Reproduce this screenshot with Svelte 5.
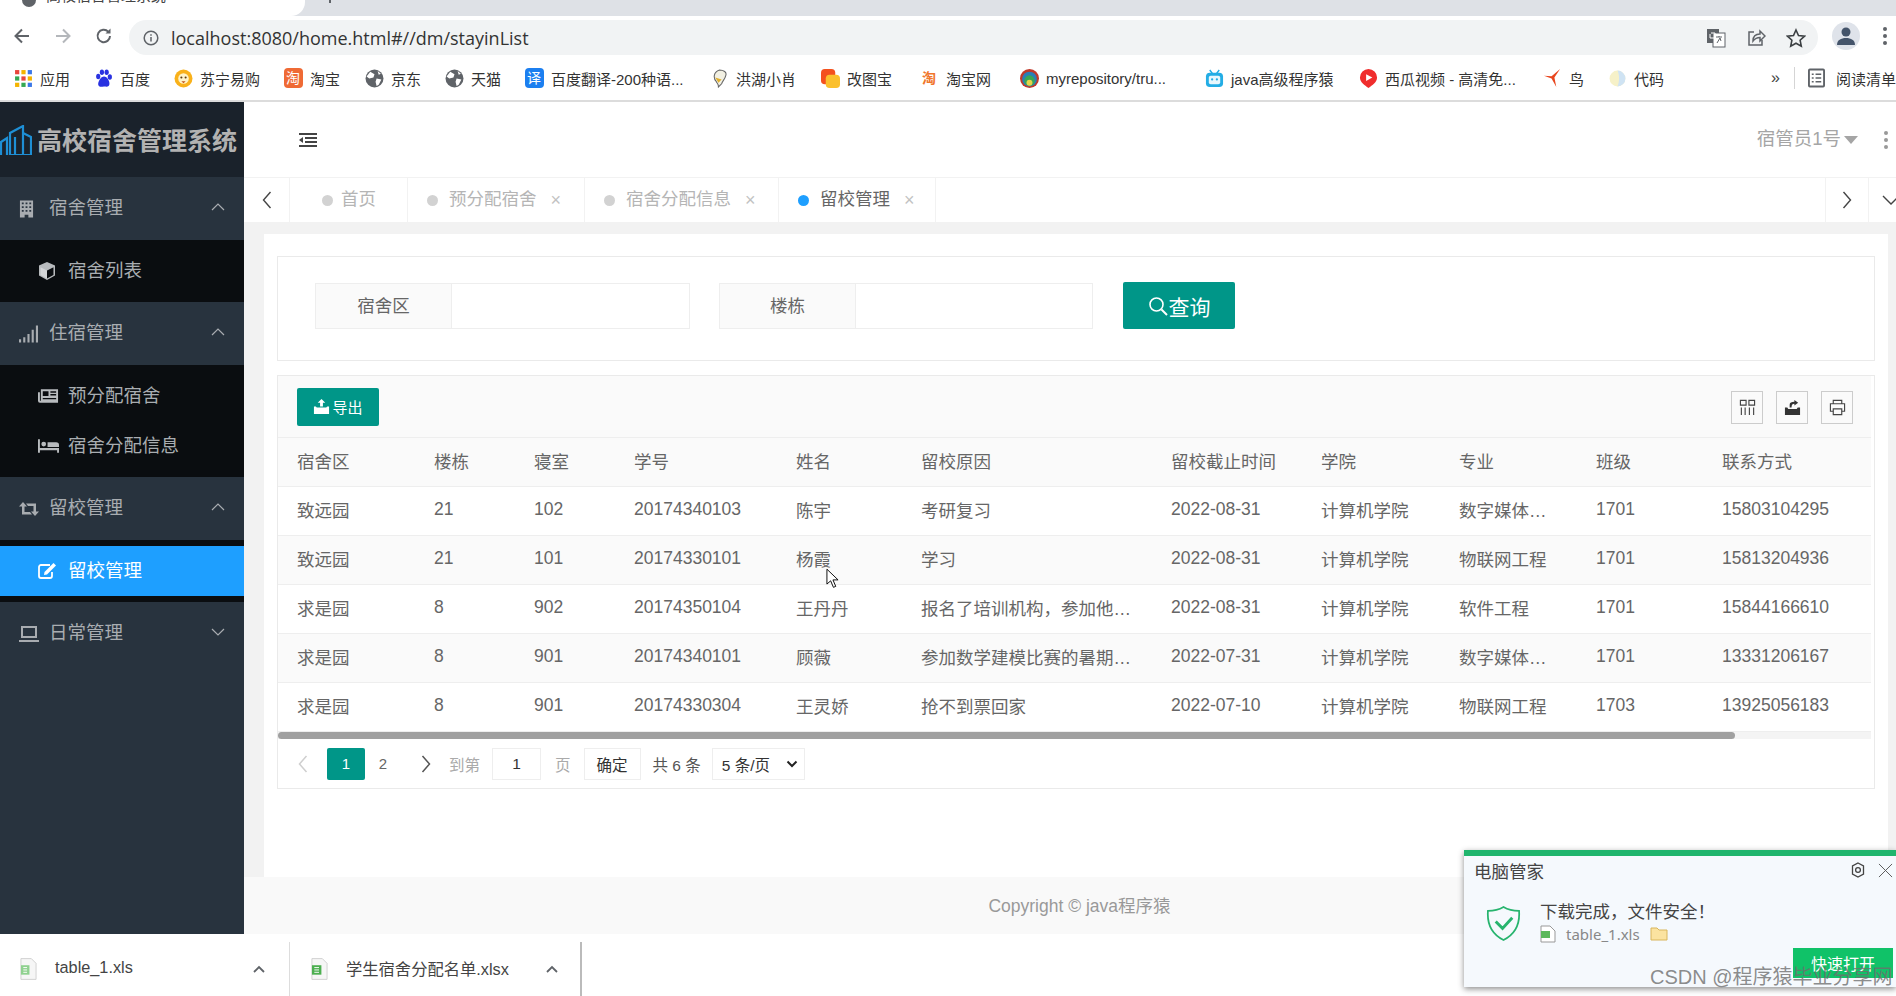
<script>
  const bookmarks = [
    { k: 'apps', t: '应用', w: 80 },
    { k: 'baidu', t: '百度', w: 80 },
    { k: 'suning', t: '苏宁易购', w: 110 },
    { k: 'tao', t: '淘宝', w: 81 },
    { k: 'globe', t: '京东', w: 80 },
    { k: 'globe', t: '天猫', w: 80 },
    { k: 'yi', t: '百度翻译-200种语...', w: 185 },
    { k: 'bird', t: '洪湖小肖', w: 111 },
    { k: 'tu', t: '改图宝', w: 99 },
    { k: 'tao2', t: '淘宝网', w: 100 },
    { k: 'repo', t: 'myrepository/tru...', w: 185 },
    { k: 'bili', t: 'java高级程序猿', w: 154 },
    { k: 'xigua', t: '西瓜视频 - 高清免...', w: 184 },
    { k: 'niao', t: '鸟', w: 65 },
    { k: 'code', t: '代码', w: 80 }
  ];
  const tabs = [
    { t: '首页', w: 118, x: false },
    { t: '预分配宿舍', w: 177, x: true },
    { t: '宿舍分配信息', w: 194, x: true },
    { t: '留校管理', w: 157, x: true, on: true }
  ];
  const cols = ['宿舍区', '楼栋', '寝室', '学号', '姓名', '留校原因', '留校截止时间', '学院', '专业', '班级', '联系方式'];
  const rows = [
    ['致远园', '21', '102', '20174340103', '陈宇', '考研复习', '2022-08-31', '计算机学院', '数字媒体…', '1701', '15803104295'],
    ['致远园', '21', '101', '20174330101', '杨霞', '学习', '2022-08-31', '计算机学院', '物联网工程', '1701', '15813204936'],
    ['求是园', '8', '902', '20174350104', '王丹丹', '报名了培训机构，参加他…', '2022-08-31', '计算机学院', '软件工程', '1701', '15844166610'],
    ['求是园', '8', '901', '20174340101', '顾薇', '参加数学建模比赛的暑期…', '2022-07-31', '计算机学院', '数字媒体…', '1701', '13331206167'],
    ['求是园', '8', '901', '20174330304', '王灵娇', '抢不到票回家', '2022-07-10', '计算机学院', '物联网工程', '1703', '13925056183']
  ];
</script>

{#snippet bmIcon(k)}
  {#if k === 'apps'}
    <svg viewBox="0 0 18 18" class="bi">
      {#each [0, 1, 2] as r}{#each [0, 1, 2] as c}
        <rect x={1 + c * 6} y={1 + r * 6} width="4" height="4" fill={['#e8453c', '#f4b400', '#3b78e7', '#34a853', '#e8453c', '#f4b400', '#f4b400', '#34a853', '#3b78e7'][r * 3 + c]} />
      {/each}{/each}
    </svg>
  {:else if k === 'baidu'}
    <svg viewBox="0 0 18 18" class="bi"><g fill="#2932e1"><ellipse cx="4" cy="7" rx="2" ry="2.6" /><ellipse cx="7.5" cy="3" rx="2" ry="2.6" /><ellipse cx="12" cy="3" rx="2" ry="2.6" /><ellipse cx="15" cy="7.5" rx="2" ry="2.6" /><path d="M9.5 7c3 0 6 5 5 8-1 2.500-3 1.500-5 1.500S5 18 4 15c-.5-3 2.500-8 5.500-8z" /></g></svg>
  {:else if k === 'suning'}
    <svg viewBox="0 0 18 18" class="bi"><circle cx="9" cy="9" r="8.500" fill="#f9b11a" /><circle cx="9" cy="9" r="5" fill="#fff3c8" /><circle cx="7" cy="8" r="1" fill="#5a3a10" /><circle cx="11" cy="8" r="1" fill="#5a3a10" /><path d="M7 11.500h4l-2 2z" fill="#c4541a" /></svg>
  {:else if k === 'tao'}
    <span class="glyph tao">淘</span>
  {:else if k === 'globe'}
    <svg viewBox="0 0 18 18" class="bi"><circle cx="9" cy="9" r="8.500" fill="#5f6368" /><path d="M5 2.500 9 5l-1 3-4 1-2.500-2zM11 9l4.500 1-2.500 5-2 1-1-4zM12 2l3 2.500-2 1z" fill="#fff" /></svg>
  {:else if k === 'yi'}
    <span class="glyph yi">译</span>
  {:else if k === 'bird'}
    <svg viewBox="0 0 18 18" class="bi"><path d="M9 1c4 0 7 2 6 5-1 4-3 5-4 8l-3 3c0-3-1-3-2-5C3 9 3 3 9 1z" fill="#f2f0e2" stroke="#666" /><path d="M5 8l6 2-3 3z" fill="#e0b030" /></svg>
  {:else if k === 'tu'}
    <svg viewBox="0 0 20 20" class="bi"><rect x="0" y="0" width="15" height="16" rx="4" fill="#f4511e" /><rect x="5" y="6" width="15" height="14" rx="4" fill="#fbc02d" /></svg>
  {:else if k === 'tao2'}
    <span class="glyph tao2">淘</span>
  {:else if k === 'repo'}
    <svg viewBox="0 0 18 18" class="bi"><circle cx="9" cy="9" r="9" fill="#c0392b" /><circle cx="9" cy="9.500" r="7" fill="#2a7fb8" /><circle cx="9" cy="11" r="5" fill="#3aa655" /><circle cx="9" cy="13" r="2.800" fill="#e4d34a" /></svg>
  {:else if k === 'bili'}
    <svg viewBox="0 0 20 20" class="bi"><path d="M5 1l3 4M15 1l-3 4" stroke="#23ade5" stroke-width="1.500" /><rect x="1" y="4" width="18" height="15" rx="4" fill="#23ade5" /><rect x="4" y="7" width="12" height="9" rx="2" fill="#e7f7fd" /><circle cx="7.500" cy="11" r="1.200" fill="#23ade5" /><circle cx="12.500" cy="11" r="1.200" fill="#23ade5" /></svg>
  {:else if k === 'xigua'}
    <svg viewBox="0 0 18 20" class="bi"><path d="M9 0a9 9 0 0 1 9 9c0 5-5 8-9 11-4-3-9-6-9-11a9 9 0 0 1 9-9z" fill="#f02d2d" /><path d="M6.500 5.500l6.500 3.500-6.500 3.500z" fill="#fff" /></svg>
  {:else if k === 'niao'}
    <svg viewBox="0 0 18 20" class="bi"><path d="M17 0 11 9l2 10-5-9-8-3 8 .5z" fill="#e8461e" /></svg>
  {:else}
    <svg viewBox="0 0 18 18" class="bi"><circle cx="9" cy="9" r="7.500" fill="#f6f1c8" /><path d="M9 1.500a7.500 7.500 0 0 1 0 15c2-4 2-11 0-15z" fill="#cfe3f3" /></svg>
  {/if}
{/snippet}

{#snippet chev(up)}
  <svg class="chev" viewBox="0 0 14 8"><path d={up ? 'M1 7l6-6 6 6' : 'M1 1l6 6 6-6'} fill="none" stroke="currentColor" stroke-width="1.200" /></svg>
{/snippet}

<div class="page">
  <div class="tabstrip">
    <div class="ctab"><i class="fav"></i><span>高校宿舍管理系统</span></div>
    <i class="plus"></i>
  </div>

  <div class="toolbar">
    <svg class="nav" viewBox="0 0 20 20"><path d="M17 10H4M10 3.500 3.500 10l6.500 6.500" fill="none" stroke="#5f6368" stroke-width="2" /></svg>
    <svg class="nav" viewBox="0 0 20 20"><path d="M3 10h13M10 3.500l6.500 6.500-6.500 6.500" fill="none" stroke="#b4b7bb" stroke-width="2" /></svg>
    <svg class="nav" viewBox="0 0 20 20"><path d="M16 10a6.200 6.200 0 1 1-1.800-4.400" fill="none" stroke="#5f6368" stroke-width="2" /><path d="M16.500 2.500v5h-5z" fill="#5f6368" /></svg>
    <div class="omni">
      <svg class="info" viewBox="0 0 16 16"><circle cx="8" cy="8" r="6.800" fill="none" stroke="#5f6368" stroke-width="1.500" /><path d="M8 7v4.500M8 4.200v1.500" stroke="#5f6368" stroke-width="1.500" /></svg>
      <span class="url">localhost:8080/home.html#//dm/stayinList</span>
      <span class="grow"></span>
      <svg class="oi" viewBox="0 0 20 20"><rect x="1" y="1" width="12" height="14" fill="#5f6368" /><rect x="7" y="5" width="12" height="14" fill="#fff" stroke="#5f6368" /><path d="M10 9h6M13 8v1M11 15l3-5 1 3" fill="none" stroke="#5f6368" /><path d="M5 5h4v5H4V6" fill="none" stroke="#fff" /></svg>
      <svg class="oi" viewBox="0 0 20 20"><path d="M8 4H3v13h13v-5" fill="none" stroke="#5f6368" stroke-width="1.500" /><path d="M7 13c0-5 3-7 7-7V3l5 5-5 5V9.500c-3 0-5 1-7 3.500z" fill="none" stroke="#5f6368" stroke-width="1.500" /></svg>
      <svg class="oi star" viewBox="0 0 20 20"><path d="M10 2l2.500 5.500 6 .7-4.400 4 1.200 6L10 15.200 4.700 18.200l1.200-6-4.400-4 6-.7z" fill="none" stroke="#3c4043" stroke-width="1.600" /></svg>
    </div>
    <div class="avatar"><svg viewBox="0 0 28 28"><circle cx="14" cy="10" r="4.500" fill="#44546a" /><path d="M5 23c0-5 4-7 9-7s9 2 9 7z" fill="#44546a" /></svg></div>
    <div class="dots"><i></i><i></i><i></i></div>
  </div>

  <div class="bookmarks">
    {#each bookmarks as b}
      <div class="bm" style="width:{b.w}px">
        <span class="bmi">{@render bmIcon(b.k)}</span>
        <span>{b.t}</span>
      </div>
    {/each}
    <span class="grow"></span>
    <span class="more">»</span>
    <i class="bsep"></i>
    <svg class="rl" viewBox="0 0 18 20"><rect x="1" y="1" width="16" height="18" rx="1" fill="none" stroke="#5f6368" stroke-width="2" /><path d="M4 6h2M8 6h6M4 10h2M8 10h6M4 14h2M8 14h6" stroke="#5f6368" stroke-width="1.500" /></svg>
    <span class="rlt">阅读清单</span>
  </div>

  <div class="app">
    <aside class="side">
      <div class="logo">
        <svg viewBox="0 0 32 30" class="logoi"><g fill="none" stroke="#1e8fd5" stroke-width="2.200"><path d="M1 30V17l6-4v17" /><path d="M10 30V8l13-7v29H10z" /><path d="M23 30h8V12l-8-4" /><path d="M15 30V12" /></g></svg>
        <span>高校宿舍管理系统</span>
      </div>

      <div class="grp">
        <svg class="gi" viewBox="0 0 16 18"><path d="M1 0h14v18h-5v-3H6v3H1z" fill="#a8acb0" /><path d="M3 2h2v2H3zM7 2h2v2H7zM11 2h2v2h-2zM3 6h2v2H3zM7 6h2v2H7zM11 6h2v2h-2zM3 10h2v2H3zM7 10h2v2H7zM11 10h2v2h-2z" fill="#2a3540" /></svg>
        <span>宿舍管理</span>{@render chev(true)}
      </div>
      <div class="subs one">
        <div class="sub">
          <svg class="si" viewBox="0 0 18 18"><path d="M9 0 1 3.500v10L9 18l8-4.500v-10z" fill="#b8bbbe" /><path d="M9 8.500v8L2.500 13V5.200zM9 8.500 15.500 5.200V13L9 16.500z" fill="#d4d6d8" /><path d="M9 8.500V16.500L15.500 13V5.200z" fill="#0a0d10" /></svg>
          <span>宿舍列表</span>
        </div>
      </div>

      <div class="grp">
        <svg class="gi sig" viewBox="0 0 18 16"><path d="M0 13h2v3H0zM4 11h2v5H4zM8 8h2v8H8zM12 4h2v12h-2zM16 0h2v16h-2z" fill="#a8acb0" /></svg>
        <span>住宿管理</span>{@render chev(true)}
      </div>
      <div class="subs two">
        <div class="sub">
          <svg class="si wide" viewBox="0 0 22 16"><path d="M3 1h18v14H2a2 2 0 0 1-2-2V4h2v9h1z" fill="#b8bbbe" /><path d="M5 3h6v5H5zM13 3h6v1.500h-6zM13 6h6v1.500h-6zM5 10h14v1.500H5z" fill="#0a0d10" /></svg>
          <span>预分配宿舍</span>
        </div>
        <div class="sub">
          <svg class="si wide" viewBox="0 0 22 14"><path d="M0 0h2v9h20v5h-2v-2.500H2V14H0z" fill="#b8bbbe" /><circle cx="6" cy="5" r="2.500" fill="#b8bbbe" /><path d="M10 3h9a3 3 0 0 1 3 3v2H10z" fill="#b8bbbe" /></svg>
          <span>宿舍分配信息</span>
        </div>
      </div>

      <div class="grp">
        <svg class="gi wide" viewBox="0 0 20 14"><path d="M4 0 8 4.500H5.500V10H11l2 2.500H3V4.500H0zM7 1.500h10v8h3L16 14l-4-4.500h2.500V4H9z" fill="#a8acb0" /></svg>
        <span>留校管理</span>{@render chev(true)}
      </div>
      <div class="subs three">
        <div class="sub on">
          <svg class="si" viewBox="0 0 18 16"><path d="M12 2H3a2 2 0 0 0-2 2v9a2 2 0 0 0 2 2h9a2 2 0 0 0 2-2V9" fill="none" stroke="#fff" stroke-width="1.800" /><path d="M15.500 0 18 2.500 9 11.500l-3 .5.5-3z" fill="#fff" /></svg>
          <span>留校管理</span>
        </div>
      </div>

      <div class="grp">
        <svg class="gi wide" viewBox="0 0 20 16"><path d="M3 1h14v10H3z" fill="none" stroke="#a8acb0" stroke-width="2" /><path d="M0 14h20v2H0z" fill="#a8acb0" /></svg>
        <span>日常管理</span>{@render chev(false)}
      </div>
    </aside>

    <main class="main">
      <header class="head">
        <svg class="ham" viewBox="0 0 18 14"><path d="M0 0h18v2H0zM6 4h12v2H6zM6 8h12v2H6zM0 12h18v2H0z" fill="#444" /><path d="M4 4v6L0 7z" fill="#444" /></svg>
        <span class="grow"></span>
        <span class="user">宿管员1号</span>
        <i class="tri"></i>
        <div class="hdots"><i></i><i></i><i></i></div>
      </header>

      <nav class="tabs">
        <div class="tnav">
          <svg viewBox="0 0 10 18"><path d="M8.500 1 1.500 9l7 8" fill="none" stroke="#444" stroke-width="1.400" /></svg>
        </div>
        {#each tabs as t, i}
          <div class="tab" class:on={t.on} class:home={i === 0} style="width:{t.w}px">
            <i class="dot"></i>
            <span class="tt">{t.t}</span>
            {#if t.x}<span class="x">×</span>{/if}
          </div>
        {/each}
        <span class="grow"></span>
        <div class="tnav r">
          <svg viewBox="0 0 10 18"><path d="M1.500 1l7 8-7 8" fill="none" stroke="#444" stroke-width="1.400" /></svg>
        </div>
        <div class="tnav end">
          <svg viewBox="0 0 18 10"><path d="M1 1l8 8 8-8" fill="none" stroke="#444" stroke-width="1.400" /></svg>
        </div>
      </nav>

      <section class="body">
        <div class="wrap">
          <div class="panel search">
            <div class="field f1"><label>宿舍区</label><div class="inp"></div></div>
            <div class="field f2"><label>楼栋</label><div class="inp"></div></div>
            <button class="query">
              <svg viewBox="0 0 20 20"><circle cx="8.500" cy="8.500" r="6.500" fill="none" stroke="#fff" stroke-width="1.600" /><path d="M13.500 13.500 19 19" stroke="#fff" stroke-width="2" /></svg>
              查询
            </button>
          </div>

          <div class="panel tbl">
            <div class="tools">
              <button class="export">
                <svg viewBox="0 0 18 18"><path d="M1 9h2l1 1h10l1-1h2v8H1z" fill="#fff" /><path d="M9 1l4 4h-2.500v4h-3V5H5z" fill="#fff" /></svg>
                导出
              </button>
              <span class="grow"></span>
              <div class="tool"><svg viewBox="0 0 18 18"><path d="M1.500 1.500h6v5h-6zM10.500 1.500h6v5h-6z" fill="none" stroke="#444" stroke-width="1.200" /><path d="M2.500 9v8M6.500 9v8M11 9v8M15.500 9v8" stroke="#444" stroke-width="1.200" /></svg></div>
              <div class="tool"><svg viewBox="0 0 18 18"><path d="M1 9h2.500l1 1.500h9l1-1.500H17v8H1z" fill="#333" /><path d="M6 9V6c0-2 2-3 5-3V1l4 3-4 3V5c-2 0-3 1-3 4z" fill="#333" /></svg></div>
              <div class="tool"><svg viewBox="0 0 18 18"><path d="M4.500 5V1.500h9V5M4.500 13H1.500V5h15v8h-3" fill="none" stroke="#444" stroke-width="1.200" /><path d="M4.500 10.500h9v6h-9z" fill="none" stroke="#444" stroke-width="1.200" /></svg></div>
            </div>

            <div class="row hd">
              {#each cols as c}<div class="cell">{c}</div>{/each}
            </div>
            {#each rows as r, i}
              <div class="row" class:alt={i % 2 === 1}>
                {#each r as c}<div class="cell">{c}</div>{/each}
              </div>
            {/each}

            <div class="scroll"><i></i></div>

            <div class="pager">
              <svg class="pa first" viewBox="0 0 10 18"><path d="M8.500 1 1.500 9l7 8" fill="none" stroke="#cfcfcf" stroke-width="1.500" /></svg>
              <span class="pg cur">1</span>
              <span class="pg">2</span>
              <svg class="pa" viewBox="0 0 10 18"><path d="M1.500 1l7 8-7 8" fill="none" stroke="#555" stroke-width="1.500" /></svg>
              <span class="lite dao">到第</span>
              <span class="box">1</span>
              <span class="lite ye">页</span>
              <span class="box ok">确定</span>
              <span class="total">共 6 条</span>
              <span class="box sel">5 条/页<svg viewBox="0 0 12 8"><path d="M1.500 1.500 6 6l4.500-4.500" fill="none" stroke="#222" stroke-width="2" /></svg></span>
            </div>
          </div>
        </div>
        <footer class="foot">Copyright © java程序猿</footer>
      </section>
    </main>
  </div>

  <div class="downloads">
    <div class="dl d1">
      <svg class="file" viewBox="0 0 18 24"><path d="M1 1h11l5 5v17H1z" fill="#f6f6f6" stroke="#cfcfcf" /><rect x="1" y="8" width="9" height="10" fill="#8fd18f" /><path d="M3.500 10.500h4M3.500 13h4M3.500 15.500h4" stroke="#fff" /></svg>
      <span class="dln">table_1.xls</span>
      <svg class="dch" viewBox="0 0 12 8"><path d="M1 7l5-5 5 5" fill="none" stroke="#5f6368" stroke-width="1.800" /></svg>
    </div>
    <div class="dl d2">
      <svg class="file" viewBox="0 0 18 24"><path d="M1 1h11l5 5v17H1z" fill="#f6f6f6" stroke="#cfcfcf" /><rect x="1" y="8" width="10" height="10" fill="#4caf50" /><path d="M3.500 10.500h5M3.500 13h5M3.500 15.500h5" stroke="#fff" /></svg>
      <span class="dln">学生宿舍分配名单.xlsx</span>
      <svg class="dch" viewBox="0 0 12 8"><path d="M1 7l5-5 5 5" fill="none" stroke="#5f6368" stroke-width="1.800" /></svg>
    </div>
  </div>

  <svg class="cursor" viewBox="0 0 14 22"><path d="M1 1v16l4-3.500 3 7 2.500-1-3-7H13z" fill="#fff" stroke="#000" /></svg>

  <div class="toast">
    <div class="ttop">
      <span class="ttitle">电脑管家</span>
      <span class="grow"></span>
      <svg class="gear" viewBox="0 0 16 16"><path d="M8 1l5.500 3v8L8 15l-5.500-3V4z" fill="none" stroke="#444" stroke-width="1.300" /><circle cx="8" cy="8" r="2.400" fill="none" stroke="#444" stroke-width="1.300" /></svg>
      <svg class="close" viewBox="0 0 16 16"><path d="M1 1l14 14M15 1 1 15" stroke="#555" stroke-width="1" /></svg>
    </div>
    <div class="tmain">
      <svg class="shield" viewBox="0 0 36 36"><path d="M18 1c5 3 10 4 16 4 1 13-4 24-16 30C6 29 1 18 2 5c6 0 11-1 16-4z" fill="none" stroke="#27b46e" stroke-width="1.800" /><path d="M10 16l7 7 10-11" fill="none" stroke="#27b46e" stroke-width="3" /></svg>
      <div class="tcol">
        <div class="tmsg">下载完成，文件安全！</div>
        <div class="tfile">
          <svg viewBox="0 0 16 18"><path d="M1 1h9l5 5v11H1z" fill="#fff" stroke="#999" /><rect x="1" y="6" width="9" height="7" fill="#5cb85c" /></svg>
          <span>table_1.xls</span>
          <svg viewBox="0 0 18 14"><path d="M1 1h6l2 2h8v10H1z" fill="#fbe3a0" stroke="#d9b65c" /></svg>
        </div>
      </div>
    </div>
    <div class="topen">快速打开</div>
    <div class="mark">CSDN @程序猿毕业分享网</div>
  </div>
</div>

<style>
  :global(body) { margin: 0; }
  .page {
    width: 1896px; height: 996px; overflow: hidden; position: relative;
    display: flex; flex-direction: column; background: #fff;
    font-family: "Liberation Sans", "Noto Sans CJK SC", sans-serif; color: #666;
  }
  .grow { flex: 1; }
  button { font-family: inherit; border: 0; cursor: pointer; }

  .tabstrip { height: 16px; background: #dee1e6; display: flex; align-items: flex-end; flex: none; overflow: hidden; }
  .ctab {
    width: 305px; height: 16px; background: #fff; border-radius: 0 0 14px 0; display: flex; align-items: flex-end; gap: 10px;
    padding-left: 22px; box-sizing: border-box; font-size: 15px; color: #444; line-height: 20px; white-space: nowrap; overflow: hidden; flex: none;
  }
  .ctab span { padding-bottom: 10px; height: 20px; flex: none; }
  .fav { width: 14px; height: 14px; border-radius: 50%; background: #5f6368; margin-bottom: 9px; flex: none; }
  .plus { width: 2px; height: 3px; background: #5f6368; margin: 0 0 13px 24px; }

  .toolbar { height: 40px; display: flex; align-items: center; flex: none; padding-left: 12px; }
  .nav { width: 20px; height: 20px; margin-right: 21px; flex: none; }
  .nav:nth-child(3) { margin-right: 15px; }
  .omni {
    width: 1689px; height: 35px; background: #f1f3f4; border-radius: 18px; display: flex; align-items: center;
    padding: 0 6px 0 14px; box-sizing: border-box; flex: none; margin-top: 3px;
  }
  .info { width: 16px; height: 16px; margin-right: 12px; }
  .url { font-family: "Open Sans", sans-serif; font-size: 18px; color: #333; }
  .oi { width: 20px; height: 20px; margin-left: 20px; }
  .star { margin-right: 6px; }
  .avatar { width: 28px; height: 28px; border-radius: 50%; background: #dfe3ea; margin-left: 14px; flex: none; }
  .avatar svg { display: block; }
  .dots { display: flex; flex-direction: column; gap: 3px; margin-left: 23px; }
  .dots i, .hdots i { width: 4px; height: 4px; background: #5f6368; border-radius: 50%; }

  .bookmarks {
    height: 46px; box-sizing: border-box; border-bottom: 2px solid #dcdcdc; display: flex; align-items: center;
    padding-left: 13px; font-size: 15px; color: #333; flex: none; white-space: nowrap; overflow: hidden;
  }
  .bm { display: flex; align-items: center; flex: none; }
  .bmi { width: 20px; height: 20px; display: flex; align-items: center; justify-content: center; margin-right: 7px; flex: none; }
  .bi { width: 19px; height: 19px; }
  .glyph { width: 19px; height: 20px; border-radius: 4px; color: #fff; font-size: 14px; line-height: 20px; text-align: center; display: block; }
  .tao { background: #ef6a35; }
  .yi { background: #1c7ff0; }
  .tao2 { background: #fff; color: #f0762b; font-weight: 700; }
  .more { font-size: 16px; color: #444; margin-right: 14px; }
  .bsep { width: 1px; height: 22px; background: #d5d5d5; margin-right: 13px; }
  .rl { width: 17px; height: 20px; margin-right: 11px; flex: none; }
  .rlt { flex: none; }

  .app { height: 832px; display: flex; flex: none; }
  .side { width: 244px; flex: none; background: #28333e; color: #a9adb1; font-size: 18.500px; }
  .logo { height: 75px; background: #1a222b; display: flex; align-items: center; color: #b2b2b2; font-size: 25px; font-weight: 700; white-space: nowrap; box-sizing: border-box; }
  .logo span { padding-bottom: 2px; }
  .logoi { width: 32px; height: 30px; margin-right: 5px; flex: none; }
  .grp { height: 63px; display: flex; align-items: center; padding-left: 19px; }
  .grp span { width: 162px; padding-bottom: 5px; }
  .gi { width: 15px; height: 18px; margin: 0 15px 0 0; flex: none; }
  .gi.wide { width: 20px; margin-right: 10px; }
  .gi.sig { width: 19px; margin-right: 11px; }
  .chev { width: 14px; height: 8px; color: #a9adb1; margin-bottom: 4px; }
  .subs { background: #0a0d10; }
  .one { height: 62px; }
  .two { height: 112px; padding-top: 6px; box-sizing: border-box; }
  .three { height: 62px; padding: 6px 0; box-sizing: border-box; }
  .sub { height: 50px; display: flex; align-items: center; padding-left: 38px; }
  .sub span { padding-bottom: 4px; }
  .one .sub { height: 62px; }
  .si { width: 18px; height: 18px; margin-right: 12px; flex: none; }
  .si.wide { width: 21px; margin-right: 9px; }
  .sub.on { background: #1e9fff; color: #fff; }

  .main { flex: 1; min-width: 0; display: flex; flex-direction: column; background: #f2f2f2; }
  .head { height: 75px; background: #fff; display: flex; align-items: center; padding-left: 55px; flex: none; box-sizing: border-box; }
  .ham { width: 18px; height: 14px; }
  .user { font-size: 18.500px; color: #a5a5a5; padding-bottom: 5px; }
  .tri { width: 0; height: 0; border: 7px solid transparent; border-top: 8px solid #a5a5a5; border-bottom: 0; margin: 0 26px 0 3px; }
  .hdots { display: flex; flex-direction: column; gap: 3px; margin-right: 8px; }
  .hdots i { background: #999; }
  .tabs { height: 45px; background: #fff; display: flex; align-items: stretch; flex: none; border-top: 1px solid #f2f2f2; box-sizing: border-box; font-size: 17.500px; }
  .tnav { width: 46px; flex: none; display: flex; align-items: center; justify-content: center; border-right: 1px solid #f2f2f2; box-sizing: border-box; }
  .tnav svg { width: 10px; height: 18px; }
  .tnav.r { width: 44px; border-left: 1px solid #f2f2f2; border-right: 1px solid #f2f2f2; }
  .tnav.end { width: 27px; border: 0; justify-content: flex-start; padding-left: 13px; }
  .tnav.end svg { width: 18px; height: 10px; flex: none; }
  .tab { display: flex; align-items: center; border-right: 1px solid #f2f2f2; color: #b5b5b5; padding-left: 19px; box-sizing: border-box; white-space: nowrap; flex: none; }
  .tab.home { padding-left: 32px; }
  .tt { padding-bottom: 5px; }
  .dot { width: 11px; height: 11px; background: #d2d2d2; border-radius: 50%; margin-right: 11px; flex: none; }
  .home .dot { margin-right: 8px; }
  .tab.on { color: #666; }
  .tab.on .dot { background: #1e9fff; }
  .x { font-size: 18px; color: #c2c2c2; margin-left: 14px; }

  .body { flex: 1; display: flex; flex-direction: column; padding: 12px 8px 0 20px; min-height: 0; }
  .wrap { flex: 1; background: #fff; padding: 22px 13px 0 13px; box-sizing: border-box; }
  .foot { height: 57px; margin: 0 -8px 0 -20px; background: #f9f9f9; display: flex; align-items: center; justify-content: center; font-size: 17.500px; color: #999; flex: none; padding: 0 0 2px 19px; box-sizing: border-box; }
  .panel { background: #fff; border: 1px solid #eaeaea; box-sizing: border-box; }
  .search { height: 105px; display: flex; align-items: center; padding: 0 0 6px 37px; margin-bottom: 14px; }
  .field { display: flex; height: 46px; border: 1px solid #eee; box-sizing: border-box; flex: none; }
  .f1 { width: 375px; margin-right: 29px; }
  .f2 { width: 374px; margin-right: 30px; }
  label { width: 136px; background: #fafafa; border-right: 1px solid #eee; display: flex; align-items: center; justify-content: center; font-size: 17.500px; color: #666; flex: none; padding-bottom: 3px; box-sizing: border-box; }
  .inp { flex: 1; }
  .query { width: 112px; height: 47px; background: #009688; color: #fff; font-size: 21px; border-radius: 2px; display: flex; align-items: center; justify-content: center; gap: 1px; flex: none; }
  .query svg { width: 20px; height: 20px; }

  .tbl { height: 414px; padding-right: 3px; }
  .tools { height: 62px; background: #fafafa; display: flex; align-items: center; padding: 0 18px 0 19px; border-bottom: 1px solid #eee; box-sizing: border-box; }
  .export { width: 82px; height: 38px; background: #009688; color: #fff; font-size: 15px; border-radius: 2px; display: flex; align-items: center; justify-content: center; gap: 2px; }
  .export svg { width: 17px; height: 17px; }
  .tool { width: 32px; height: 33px; border: 1px solid #ccc; box-sizing: border-box; display: flex; align-items: center; justify-content: center; margin: 2px 0 0 13px; }
  .tool svg { width: 17px; height: 17px; }
  .row {
    height: 49px; display: grid; align-items: center; border-bottom: 1px solid #eee; box-sizing: border-box; font-size: 17.500px; color: #666;
    grid-template-columns: 137px 100px 100px 162px 125px 250px 150px 138px 137px 126px 1fr; padding: 0 0 4px 19px; white-space: nowrap;
  }
  .row.alt { background: #fafafa; }
  .row.hd { background: #fafafa; }
  .scroll { height: 7px; background: #f4f4f4; }
  .scroll i { display: block; width: 1457px; height: 7px; background: #a0a0a0; border-radius: 4px; }
  .pager { height: 49px; display: flex; align-items: center; font-size: 15.500px; color: #666; padding-left: 20px; }
  .pa { width: 10px; height: 18px; flex: none; }
  .first { margin-right: 18px; }
  .pg { width: 38px; height: 32px; display: flex; align-items: center; justify-content: center; font-size: 15px; border-radius: 2px; flex: none; }
  .pg.cur { background: #009688; color: #fff; margin-left: 1px; }
  .pg + .pg { margin-right: 19px; margin-left: -1px; }
  .lite { color: #aaa; }
  .dao { margin: 0 12px 0 18px; }
  .box { height: 32px; border: 1px solid #eee; display: flex; align-items: center; justify-content: center; box-sizing: border-box; width: 49px; color: #333; flex: none; }
  .ye { margin: 0 13px 0 14px; }
  .ok { width: 57px; }
  .total { margin: 0 11px 0 12px; color: #555; white-space: nowrap; }
  .sel { width: 93px; justify-content: flex-start; padding-left: 9px; gap: 16px; white-space: nowrap; }
  .sel svg { width: 12px; height: 8px; flex: none; }

  .downloads { height: 62px; background: #fff; display: flex; flex: none; font-size: 16.300px; color: #444; }
  .dl { display: flex; align-items: center; box-sizing: border-box; margin-top: 8px; height: 54px; }
  .d1 { width: 290px; border-right: 1px solid #ddd; padding-left: 20px; }
  .d2 { width: 292px; border-right: 2px solid #bbb; padding-left: 21px; }
  .file { width: 17px; height: 24px; flex: none; margin-right: 18px; }
  .dln { white-space: nowrap; padding-bottom: 3px; }
  .d1 .dln { width: 198px; }
  .d2 .dln { width: 200px; }
  .dch { width: 12px; height: 8px; flex: none; }

  .cursor { position: absolute; left: 826px; top: 568px; width: 13px; height: 21px; }

  .toast {
    position: absolute; left: 1464px; top: 850px; width: 432px; height: 137px; background: #f5f9fd; border-top: 6px solid #1fb56d;
    box-sizing: border-box; box-shadow: 0 2px 6px rgba(0, 0, 0, .45); font-family: "Noto Sans CJK SC", sans-serif; color: #444; padding-left: 10px;
  }
  .ttop { display: flex; align-items: center; height: 28px; }
  .ttitle { font-size: 17.500px; color: #444; }
  .gear { width: 16px; height: 16px; margin-right: 12px; }
  .close { width: 15px; height: 15px; margin-right: 3px; }
  .tmain { display: flex; align-items: center; padding: 15px 0 0 12px; }
  .shield { width: 35px; height: 35px; margin-right: 19px; margin-top: 2px; }
  .tmsg { font-size: 17.500px; line-height: 24px; color: #444; }
  .tfile { display: flex; align-items: center; font-size: 15px; color: #888; gap: 10px; line-height: 22px; }
  .tfile svg:first-child { width: 16px; height: 18px; }
  .tfile svg:last-child { width: 18px; height: 14px; }
  .tfile span { font-family: "Noto Sans", sans-serif; }
  .topen { position: absolute; left: 329px; top: 92px; width: 100px; height: 30px; background: #10c268; color: #fff; font-size: 16px; text-align: center; line-height: 30px; }
  .mark { position: absolute; left: 186px; top: 109px; font-size: 20px; color: rgba(110, 110, 110, .8); font-family: "Liberation Sans", "Noto Sans CJK SC", sans-serif; white-space: nowrap; line-height: 24px; }
</style>
